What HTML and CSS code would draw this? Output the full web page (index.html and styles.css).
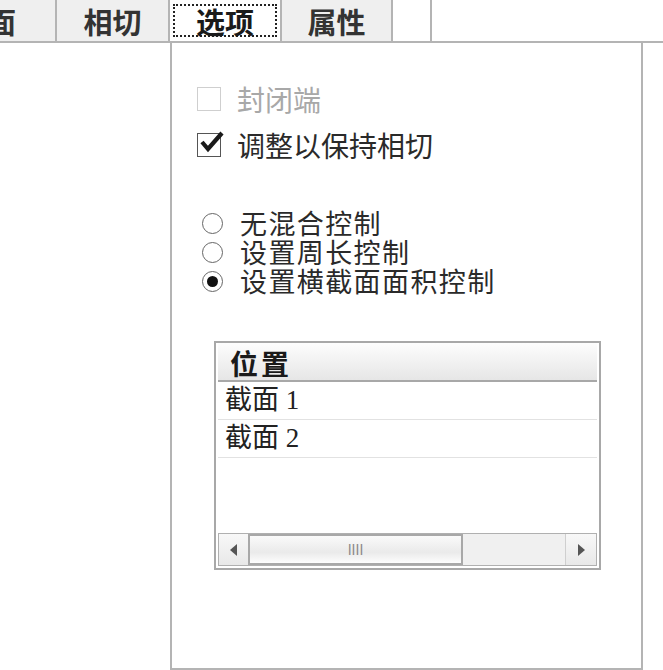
FILE: index.html
```html
<!DOCTYPE html>
<html lang="zh-CN">
<head>
  <meta charset="UTF-8" />
  <title>选项</title>
  <link rel="stylesheet" href="styles.css">
</head>
<body>
  <div class="dialog">
    <div class="tabs">
      <div class="tab tab-cut"><span>面</span></div>
      <div class="tab">相切</div>
      <div class="tab active"><span class="focus">选项</span></div>
      <div class="tab">属性</div>
      <div class="tab-rest"></div>
    </div>

    <div class="panel">
      <!-- checkboxes -->
      <div class="checks">
        <label class="row disabled">
          <span class="ctrl"><span class="box"></span></span>
          <span>封闭端</span>
        </label>
        <label class="row">
          <span class="ctrl">
            <span class="box checked">
              <svg class="tick" viewBox="0 0 26 24" width="26" height="24">
                <path d="M3 12 L9 19 L23 3" fill="none" stroke="#1a1a1a" stroke-width="4.2" stroke-linejoin="miter" />
              </svg>
            </span>
          </span>
          <span>调整以保持相切</span>
        </label>
      </div>

      <!-- radios -->
      <div class="radios">
        <label class="row"><span class="ctrl"><span class="radio"></span></span><span>无混合控制</span></label>
        <label class="row"><span class="ctrl"><span class="radio"></span></span><span>设置周长控制</span></label>
        <label class="row"><span class="ctrl"><span class="radio on"></span></span><span>设置横截面面积控制</span></label>
      </div>

      <!-- section list -->
      <div class="list">
        <div class="list-head">位置</div>
        <div class="list-row">截面 1</div>
        <div class="list-row">截面 2</div>
        <div class="list-space"></div>
        <div class="hscroll">
          <div class="sbtn"><span class="arrow left"></span></div>
          <div class="track">
            <div class="thumb"><span class="grip">llll</span></div>
          </div>
          <div class="sbtn"><span class="arrow right"></span></div>
        </div>
      </div>
    </div>
  </div>
</body>
</html>
```

FILE: styles.css
```css
:root {
  --line: #b4b4b4;
  --tab-bg: #efefef;
  --text: #2a2a2a;
  --muted: #a8a8a8;
}

body {
  margin: 0;
  background: #fff;
  font-family: "Noto Sans CJK SC", sans-serif;
  color: var(--text);
}

.dialog {
  width: 663px;
  height: 670px;
  overflow: hidden;
}

/* tab strip */
.tabs {
  display: flex;
  height: 43px;
  box-sizing: border-box;
  border-bottom: 2px solid var(--line);
}

.tab {
  box-sizing: border-box;
  display: flex;
  align-items: center;
  justify-content: center;
  border-right: 2px solid var(--line);
  background: var(--tab-bg);
  font-size: 29px;
  font-weight: 700;
  color: #333;
  line-height: 30px;
  padding-top: 1px;
  width: 113px;
}

.tab-cut {
  width: 57px;
  justify-content: flex-end;
  padding-right: 39px;
  overflow: hidden;
  white-space: nowrap;
}

.tab.active {
  width: 112px;
  background: #fff;
  color: #1a1a1a;
  padding-top: 0;
}

.tab.active + .tab {
  width: 111px;
}

.focus {
  box-sizing: border-box;
  width: 104px;
  height: 33px;
  display: flex;
  align-items: center;
  justify-content: center;
  border: 2px dotted #222;
  padding-top: 1px;
}

.tab-rest {
  box-sizing: border-box;
  width: 39px;
  border-right: 2px solid var(--line);
}

/* options panel */
.panel {
  box-sizing: border-box;
  margin-left: 170px;
  width: 473px;
  height: 627px;
  border: 2px solid var(--line);
  border-top: none;
  padding: 42px 0 0 24px;
}

.row {
  display: flex;
  align-items: center;
  height: 28px;
  font-size: 28px;
  line-height: 28px;
  white-space: nowrap;
}

.ctrl {
  width: 40px;
  display: flex;
  align-items: center;
}

.checks {
  display: flex;
  flex-direction: column;
  gap: 18px;
}

.checks .row span:last-child {
  margin-left: 1px;
}

.box {
  position: relative;
  box-sizing: border-box;
  width: 24px;
  height: 24px;
  border: 1.5px solid #555;
  background: #fff;
}

.disabled {
  color: var(--muted);
}

.disabled .box {
  border-color: #cfcfcf;
}

.tick {
  position: absolute;
  left: 1px;
  top: -4px;
}

.radios {
  display: flex;
  flex-direction: column;
  gap: 1px;
  margin-top: 50px;
}

.radios .row {
  font-size: 27px;
  letter-spacing: 1.4px;
}

.radios .ctrl {
  width: 44px;
  padding-left: 6px;
  box-sizing: border-box;
}

.radio {
  box-sizing: border-box;
  width: 21px;
  height: 21px;
  border: 1.5px solid #666;
  border-radius: 50%;
  display: flex;
  align-items: center;
  justify-content: center;
}

.radio.on::after {
  content: "";
  width: 11px;
  height: 11px;
  border-radius: 50%;
  background: #111;
}

/* list box */
.list {
  box-sizing: border-box;
  margin: 46px 0 0 18px;
  width: 387px;
  height: 229px;
  border: 2px solid #a8a8a8;
  padding: 0 2px 2px 2px;
  display: flex;
  flex-direction: column;
  font-family: "Liberation Serif", "Noto Sans CJK SC", serif;
}

.list-head {
  height: 39px;
  box-sizing: border-box;
  border-bottom: 2px solid #a8a8a8;
  background: linear-gradient(#fdfdfd, #e6e6e6);
  font-family: "Noto Sans CJK SC", sans-serif;
  font-weight: 700;
  font-size: 28px;
  line-height: 40px;
  letter-spacing: 3px;
  padding-left: 12px;
  color: #1a1a1a;
}

.list-row {
  height: 38px;
  box-sizing: border-box;
  border-bottom: 1px solid #e2e2e2;
  font-size: 27px;
  line-height: 36px;
  padding-left: 7px;
  color: #222;
  white-space: pre;
}

.list-space {
  flex: 1;
}

.hscroll {
  display: flex;
  height: 33px;
  box-sizing: border-box;
  border: 1px solid #b0b0b0;
  background: #f0f0f0;
}

.sbtn {
  width: 29px;
  display: flex;
  align-items: center;
  justify-content: center;
  background: linear-gradient(#f8f8f8, #e8e8e8);
}

.sbtn:last-child {
  width: 30px;
  border-left: 1px solid #cfcfcf;
}

.arrow {
  width: 0;
  height: 0;
  border-top: 6px solid transparent;
  border-bottom: 6px solid transparent;
}

.arrow.left {
  border-right: 7px solid #555;
}

.arrow.right {
  border-left: 7px solid #555;
}

.track {
  flex: 1;
  display: flex;
}

.thumb {
  box-sizing: border-box;
  width: 215px;
  border: 2px solid #a8a8a8;
  background: linear-gradient(#fafafa, #eaeaea 60%, #fdfdfd);
  display: flex;
  align-items: center;
  justify-content: center;
}

.grip {
  font-family: "DejaVu Sans", sans-serif;
  font-size: 14px;
  color: #888;
  letter-spacing: 0;
}
```
